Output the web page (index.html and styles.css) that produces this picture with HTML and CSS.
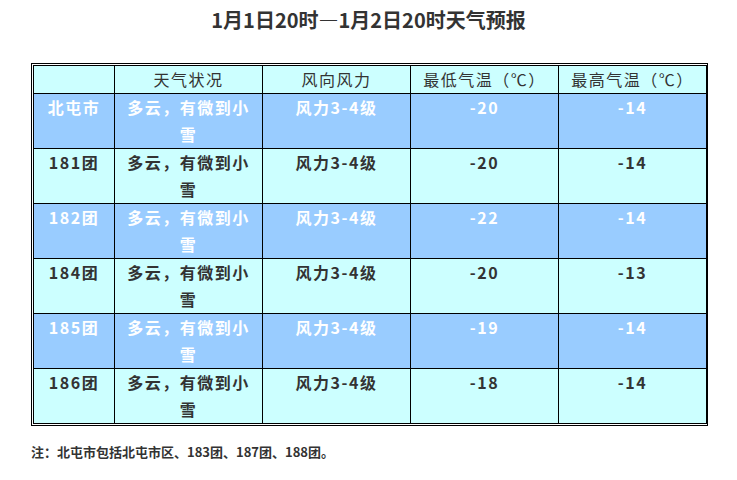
FILE: index.html
```html
<!DOCTYPE html>
<html lang="zh-CN">
<head>
<meta charset="utf-8">
<title>天气预报</title>
<link rel="stylesheet" href="styles.css">
</head>
<body>
<div class="page">
  <h1 class="title">1月1日20时—1月2日20时天气预报</h1>
  <div class="frame">
    <table class="forecast">
      <colgroup>
        <col class="c-name">
        <col class="c-wide">
        <col class="c-wide">
        <col class="c-wide">
        <col class="c-wide">
      </colgroup>
      <thead>
        <tr class="head">
          <th></th>
          <th>天气状况</th>
          <th>风向风力</th>
          <th>最低气温（℃）</th>
          <th>最高气温（℃）</th>
        </tr>
      </thead>
      <tbody>
        <tr class="blue">
          <td>北屯市</td><td>多云，有微到小雪</td><td>风力3-4级</td><td>-20</td><td>-14</td>
        </tr>
        <tr class="cyan">
          <td>181团</td><td>多云，有微到小雪</td><td>风力3-4级</td><td>-20</td><td>-14</td>
        </tr>
        <tr class="blue">
          <td>182团</td><td>多云，有微到小雪</td><td>风力3-4级</td><td>-22</td><td>-14</td>
        </tr>
        <tr class="cyan">
          <td>184团</td><td>多云，有微到小雪</td><td>风力3-4级</td><td>-20</td><td>-13</td>
        </tr>
        <tr class="blue">
          <td>185团</td><td>多云，有微到小雪</td><td>风力3-4级</td><td>-19</td><td>-14</td>
        </tr>
        <tr class="cyan">
          <td>186团</td><td>多云，有微到小雪</td><td>风力3-4级</td><td>-18</td><td>-14</td>
        </tr>
      </tbody>
    </table>
  </div>
  <p class="note">注：北屯市包括北屯市区、183团、187团、188团。</p>
</div>
</body>
</html>
```

FILE: styles.css
```css
html, body {
  margin: 0;
  padding: 0;
  background: #ffffff;
}

.page {
  width: 737px;
  padding: 5px 0 0 31px;
  box-sizing: border-box;
  font-family: "Noto Sans CJK SC", sans-serif;
  color: #333333;
}

.title {
  margin: 0 0 29px 0;
  padding-right: 31px;
  text-align: center;
  font-size: 20px;
  line-height: 29px;
  font-weight: bold;
  color: #333333;
}

.frame {
  width: 677px;
  box-sizing: border-box;
  border: 1px solid #000000;
  padding: 1px;
}

.forecast {
  width: 673px;
  table-layout: fixed;
  border-collapse: collapse;
}

.c-name { width: 81px; }
.c-wide { width: 148px; }

.forecast th,
.forecast td {
  border: 1px solid #000000;
  padding: 0 4px;
  text-align: center;
  vertical-align: top;
  line-height: 27px;
  font-size: 16px;
  letter-spacing: 1.5px;
}

.forecast th {
  font-weight: normal;
  height: 27px;
}

.forecast td {
  font-weight: bold;
  height: 54px;
}

.head { background: #ccffff; color: #333333; }
.blue { background: #99ccff; color: #ffffff; }
.cyan { background: #ccffff; color: #333333; }

.note {
  margin: 17px 0 0 0;
  font-size: 13px;
  line-height: 18px;
  font-weight: bold;
  color: #333333;
}
```
